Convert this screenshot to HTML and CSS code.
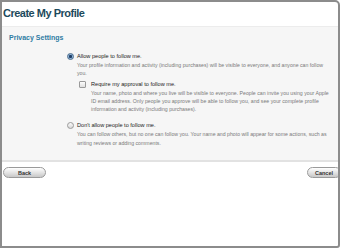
FILE: index.html
```html
<!DOCTYPE html>
<html lang="en">
<head>
    <meta charset="UTF-8">
    <title>Create My Profile</title>
    <link rel="stylesheet" href="styles.css">
</head>
<body>
    <div class="frame">
        <h1 class="title">Create My Profile</h1>

        <div class="panel">
            <h2 class="section-title">Privacy Settings</h2>

            <div class="options">
                <div class="option">
                    <span class="radio checked"></span>
                    <div class="option-body">
                        <div class="option-label">Allow people to follow me.</div>
                        <p class="option-desc">Your profile information and activity (including purchases) will be visible to everyone, and anyone can follow you.</p>

                        <div class="option sub">
                            <span class="checkbox"></span>
                            <div class="option-body">
                                <div class="option-label">Require my approval to follow me.</div>
                                <p class="option-desc">Your name, photo and where you live will be visible to everyone. People can invite you using your Apple ID email address. Only people you approve will be able to follow you, and see your complete profile information and activity (including purchases).</p>
                            </div>
                        </div>
                    </div>
                </div>

                <div class="option">
                    <span class="radio"></span>
                    <div class="option-body">
                        <div class="option-label">Don't allow people to follow me.</div>
                        <p class="option-desc">You can follow others, but no one can follow you. Your name and photo will appear for some actions, such as writing reviews or adding comments.</p>
                    </div>
                </div>
            </div>
        </div>

        <div class="actions">
            <button class="btn back">Back</button>
            <button class="btn cancel">Cancel</button>
        </div>
    </div>
</body>
</html>
```

FILE: styles.css
```css
body {
    margin: 0;
    padding: 0;
    background: #fff;
    font-family: "Liberation Sans", Arial, sans-serif;
}
.frame {
    box-sizing: border-box;
    width: 340px;
    height: 248px;
    border: 2px solid #8c8c8c;
    border-top-right-radius: 5px;
    border-bottom-right-radius: 3px;
    overflow: hidden;
    background: #fff;
}
.title {
    margin: 0;
    height: 25px;
    padding: 5px 0 0 1px;
    box-sizing: border-box;
    font-size: 11px;
    font-weight: bold;
    color: #1d4a5c;
    letter-spacing: -0.5px;
    border-bottom: 1px solid #ececec;
}
.panel {
    height: 135px;
    box-sizing: border-box;
    background: #f6f6f6;
    border-bottom: 2px solid #e2e2e2;
    padding: 7px 0 0 7px;
}
.section-title {
    margin: 0 0 11px 0;
    font-size: 7px;
    font-weight: bold;
    color: #2f7ca3;
}
.options {
    margin-left: 58px;
}
.option {
    display: flex;
    align-items: flex-start;
    gap: 3px;
    margin-bottom: 8px;
}
.option.sub {
    margin-top: 2px;
    margin-left: 2px;
    gap: 5px;
    margin-bottom: 0;
}
.radio {
    flex: none;
    width: 5px;
    height: 5px;
    margin-top: 1px;
    border-radius: 50%;
    border: 1px solid #9a9a9a;
    background: linear-gradient(#fafafa, #d8d8d8);
}
.radio.checked {
    border-color: #4a6b8a;
    background: radial-gradient(circle, #1e3e66 0 1.3px, #8fb3d9 1.8px);
}
.checkbox {
    flex: none;
    width: 5px;
    height: 5px;
    margin-top: 1px;
    border: 1px solid #9a9a9a;
    border-radius: 1px;
    background: linear-gradient(#fdfdfd, #e0e0e0);
}
.option-body {
    flex: 1;
}
.option-label {
    font-size: 5.6px;
    color: #222;
    line-height: 8px;
}
.option-desc {
    margin: 1px 0 0 0;
    font-size: 5.2px;
    color: #7a7a7a;
    line-height: 8.3px;
    padding-right: 6px;
}
.actions {
    display: flex;
    justify-content: space-between;
    padding: 5px 0 0 1px;
}
.btn {
    height: 11px;
    padding: 0;
    border: 1px solid #9a9a9a;
    border-radius: 6px;
    background: linear-gradient(#ffffff, #e4e4e4 50%, #c8c8c8);
    font-family: "Liberation Sans", Arial, sans-serif;
    font-size: 5.5px;
    font-weight: bold;
    color: #333;
    cursor: pointer;
}
.back {
    width: 43px;
}
.cancel {
    width: 34px;
    margin-right: -3px;
}
```
